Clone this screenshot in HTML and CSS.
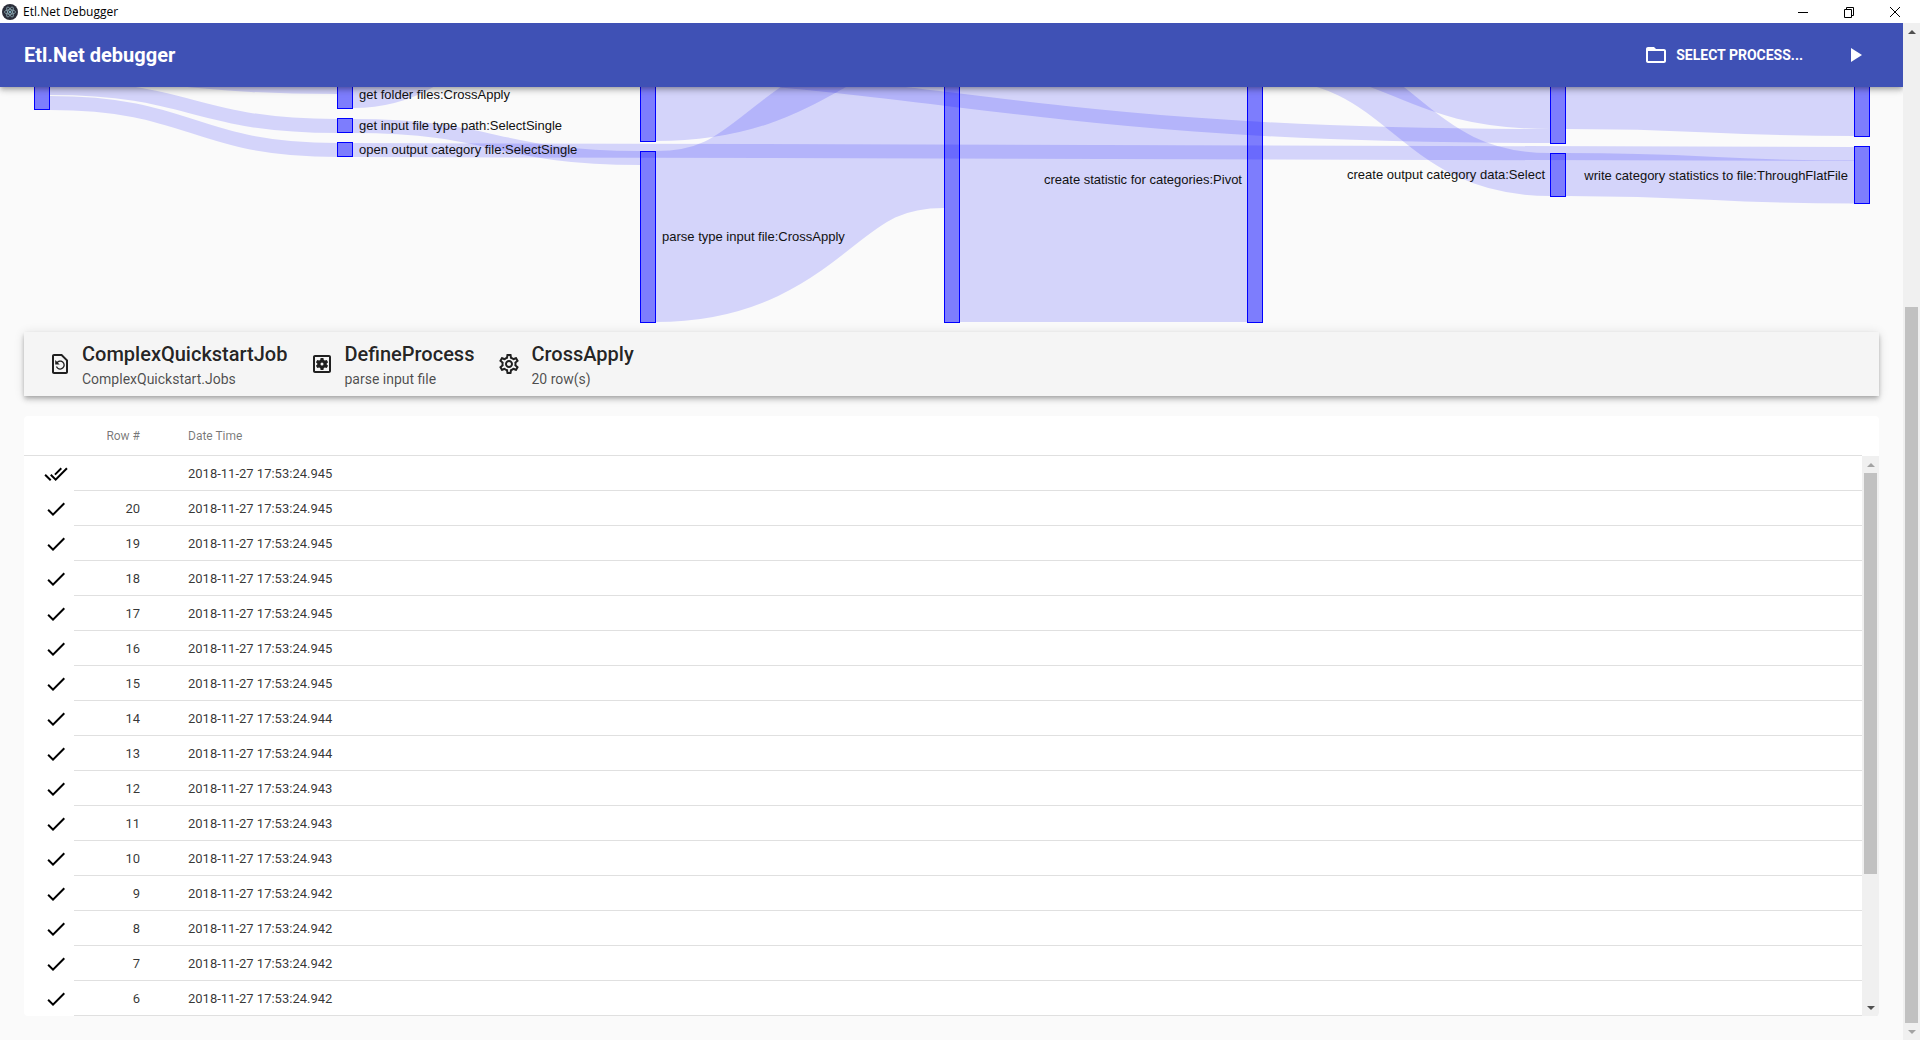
FILE: index.html
```html
<!DOCTYPE html>
<html lang="en">
<head>
<meta charset="utf-8">
<title>Etl.Net Debugger</title>
<link rel="stylesheet" href="styles.css">
</head>
<body>
<svg width="0" height="0" class="sprite" aria-hidden="true">
  <symbol id="check" viewBox="0 0 24 24"><path d="M9 16.17L4.83 12l-1.42 1.41L9 19 21 7l-1.41-1.41z"/></symbol>
  <symbol id="check-all" viewBox="0 0 24 24"><path d="M18 7l-1.41-1.41-6.34 6.34 1.41 1.41L18 7zm4.24-1.41L11.66 16.17 7.48 12l-1.41 1.41L11.66 19l12-12-1.42-1.41zM.41 13.41L6 19l1.41-1.41L1.83 12 .41 13.41z"/></symbol>
</svg>
<div class="window">
  <header class="titlebar">
    <svg class="app-icon" viewBox="0 0 16 16" aria-hidden="true">
      <circle cx="8" cy="8" r="8" fill="#2b2e3a"/>
      <g fill="none" stroke="#b4dbe4" stroke-opacity=".75" stroke-width=".7">
        <ellipse cx="8" cy="8" rx="5.6" ry="2.2"/>
        <ellipse cx="8" cy="8" rx="5.6" ry="2.2" transform="rotate(60 8 8)"/>
        <ellipse cx="8" cy="8" rx="5.6" ry="2.2" transform="rotate(120 8 8)"/>
      </g>
      <circle cx="8" cy="8" r=".9" fill="#9feaf9"/>
    </svg>
    <span class="titlebar-text">Etl.Net Debugger</span>
    <div class="window-buttons">
      <button type="button" aria-label="Minimize"><svg viewBox="0 0 12 12"><path d="M1 6.500h10"/></svg></button>
      <button type="button" aria-label="Restore"><svg viewBox="0 0 12 12"><path d="M1.500 3.500h7v8h-7zM3.500 3.500v-2h7v8h-2"/></svg></button>
      <button type="button" aria-label="Close"><svg viewBox="0 0 12 12"><path d="M1 1l10 10M11 1L1 11"/></svg></button>
    </div>
  </header>
  <div class="viewport">
    <div class="page">
      <div class="toolbar">
        <h1>Etl.Net debugger</h1>
        <button type="button" class="select-process">
          <svg class="icon" viewBox="0 0 24 24" aria-hidden="true"><path d="M20 6h-8l-2-2H4c-1.100 0-1.990.9-1.990 2L2 18c0 1.100.9 2 2 2h16c1.100 0 2-.9 2-2V8c0-1.100-.9-2-2-2zm0 12H4V8h16v10z"/></svg>
          SELECT PROCESS...
        </button>
        <button type="button" class="play" aria-label="Run"><svg class="icon" viewBox="0 0 24 24"><path d="M8 5v14l11-7z"/></svg></button>
      </div>
      <svg class="sankey" viewBox="0 87 1903 245" role="img" aria-label="Process diagram">
        <g class="links">
          <path stroke-width="14" d="M50 74C193 74 193 87 337 87"/>
          <path stroke-width="14" d="M50 88C193 88 193 126 337 126"/>
          <path stroke-width="14" d="M50 103C193 103 193 150 337 150"/>
          <path stroke-width="28" d="M353 94C496 94 496 -76 640 -76"/>
          <path stroke-width="14" d="M353 126C496 126 496 158 640 158"/>
          <path stroke-width="14" d="M353 150C1103 150 1103 154 1854 154"/>
          <path stroke-width="14" d="M353 63C951 63 951 136 1550 136"/>
          <path stroke-width="160" d="M656 61C800 61 800 -19 944 -19"/>
          <path stroke-width="171" d="M656 236.500C800 236.500 800 122.500 944 122.500"/>
          <path stroke-width="286" d="M960 179C1103 179 1103 179 1247 179"/>
          <path stroke-width="43" d="M1263 58C1406 58 1406 174.500 1550 174.500"/>
          <path stroke-width="60" d="M1263 39C1406 39 1406 99 1550 99"/>
          <path stroke-width="60" d="M1566 99C1710 99 1710 106 1854 106"/>
          <path stroke-width="43" d="M1566 174.500C1710 174.500 1710 182 1854 182"/>
        </g>
        <g class="nodes">
          <rect x="34.500" y="60.500" width="15" height="49"/>
          <rect x="337.500" y="80.500" width="15" height="28"/>
          <rect x="337.500" y="118.500" width="15" height="14"/>
          <rect x="337.500" y="142.500" width="15" height="14"/>
          <rect x="640.500" y="60.500" width="15" height="81"/>
          <rect x="640.500" y="151.500" width="15" height="171"/>
          <rect x="944.500" y="36.500" width="15" height="286"/>
          <rect x="1247.500" y="36.500" width="15" height="286"/>
          <rect x="1550.500" y="60.500" width="15" height="83"/>
          <rect x="1550.500" y="153.500" width="15" height="43"/>
          <rect x="1854.500" y="60.500" width="15" height="76"/>
          <rect x="1854.500" y="146.500" width="15" height="57"/>
        </g>
        <g class="labels">
          <text x="359" y="99">get folder files:CrossApply</text>
          <text x="359" y="130">get input file type path:SelectSingle</text>
          <text x="359" y="154">open output category file:SelectSingle</text>
          <text x="662" y="241">parse type input file:CrossApply</text>
          <text class="end" x="1242" y="184">create statistic for categories:Pivot</text>
          <text class="end" x="1545" y="179">create output category data:Select</text>
          <text class="end" x="1848" y="180">write category statistics to file:ThroughFlatFile</text>
        </g>
      </svg>
      <section class="summary">
        <div class="summary-item">
          <svg class="icon" viewBox="0 0 24 24" aria-hidden="true"><path d="M14 2H6c-1.100 0-2 .9-2 2v16c0 1.100.89 2 1.990 2H18c1.100 0 2-.9 2-2V8l-6-6zm4 18H6V4h7.170L18 8.830V20z"/><path d="M9 9.800L7.200 8v4.600h4.600L9.900 10.700c.6-.6 1.400-.9 2.300-.9 1.800 0 3.300 1.500 3.300 3.300s-1.500 3.300-3.300 3.300c-1.300 0-2.500-.8-3-2H7.800c.6 1.900 2.300 3.300 4.400 3.300 2.500 0 4.600-2.100 4.600-4.600s-2.100-4.600-4.600-4.600c-1.200 0-2.400.5-3.200 1.300z"/></svg>
          <div class="summary-text"><h2>ComplexQuickstartJob</h2><p>ComplexQuickstart.Jobs</p></div>
        </div>
        <div class="summary-item">
          <svg class="icon" viewBox="0 0 24 24" aria-hidden="true"><path d="M19 3H5c-1.110 0-2 .9-2 2v14c0 1.100.89 2 2 2h14c1.110 0 2-.9 2-2V5c0-1.100-.89-2-2-2zm0 16H5V5h14v14z"/><path d="M10.600 6h2.800l.4 1.900 1.100.6 1.800-.6 1.400 2.400-1.400 1.200v1l1.400 1.200-1.400 2.400-1.800-.6-1.100.6-.4 1.900h-2.800l-.4-1.900-1.100-.6-1.800.6-1.400-2.400 1.400-1.200v-1l-1.400-1.200 1.400-2.400 1.800.6 1.100-.6zM12 10.500a1.500 1.500 0 1 0 0 3 1.500 1.500 0 0 0 0-3z" fill-rule="evenodd"/></svg>
          <div class="summary-text"><h2>DefineProcess</h2><p>parse input file</p></div>
        </div>
        <div class="summary-item">
          <svg class="icon" viewBox="0 0 24 24" aria-hidden="true"><path d="M19.430 12.980c.04-.32.07-.64.07-.98s-.03-.66-.07-.98l2.110-1.650c.19-.15.24-.42.12-.64l-2-3.460c-.09-.16-.26-.25-.44-.25-.06 0-.12.010-.17.030l-2.490 1c-.52-.4-1.080-.73-1.690-.98l-.38-2.650C14.460 2.180 14.250 2 14 2h-4c-.25 0-.46.18-.49.42l-.38 2.650c-.61.25-1.170.59-1.690.98l-2.490-1c-.06-.02-.12-.03-.18-.03-.17 0-.34.09-.43.25l-2 3.460c-.13.22-.07.49.12.64l2.110 1.650c-.04.32-.07.65-.07.98s.03.66.07.98l-2.110 1.650c-.19.15-.24.42-.12.64l2 3.460c.09.16.26.25.44.25.06 0 .12-.01.17-.03l2.490-1c.52.4 1.080.73 1.690.98l.38 2.650c.03.24.24.42.49.42h4c.25 0 .46-.18.49-.42l.38-2.650c.61-.25 1.170-.59 1.690-.98l2.490 1c.06.02.12.03.18.03.17 0 .34-.09.43-.25l2-3.460c.12-.22.07-.49-.12-.64l-2.110-1.650zm-1.980-1.710c.04.31.05.52.05.73s-.02.43-.05.73l-.14 1.130.89.7 1.080.84-.7 1.210-1.270-.51-1.040-.42-.9.68c-.43.32-.84.56-1.250.73l-1.060.43-.16 1.130-.2 1.350h-1.400l-.19-1.350-.16-1.130-1.060-.43c-.43-.18-.83-.41-1.230-.71l-.91-.7-1.060.43-1.270.51-.7-1.210 1.080-.84.89-.7-.14-1.130c-.03-.31-.05-.54-.05-.74s.02-.43.05-.73l.14-1.130-.89-.7-1.080-.84.7-1.210 1.270.51 1.040.42.9-.68c.43-.32.84-.56 1.250-.73l1.060-.43.16-1.130.2-1.350h1.390l.19 1.350.16 1.130 1.060.43c.43.18.83.41 1.230.71l.91.7 1.060-.43 1.270-.51.7 1.210-1.070.85-.89.7.14 1.130zM12 8c-2.210 0-4 1.790-4 4s1.790 4 4 4 4-1.790 4-4-1.790-4-4-4zm0 6c-1.100 0-2-.9-2-2s.9-2 2-2 2 .9 2 2-.9 2-2 2z"/></svg>
          <div class="summary-text"><h2>CrossApply</h2><p>20 row(s)</p></div>
        </div>
      </section>
      <section class="traces">
        <table class="trace-table">
          <thead><tr><th class="status"></th><th class="num" scope="col">Row #</th><th scope="col">Date Time</th><th class="gutter"></th></tr></thead>
          <tbody id="rows"></tbody>
        </table>
        <div class="scrollbar inner" aria-hidden="true"><i class="up off"></i><b></b><i class="down"></i></div>
      </section>
    </div>
    <div class="scrollbar outer" aria-hidden="true"><i class="up"></i><b></b><i class="down off"></i></div>
  </div>
</div>
<script src="rows.js"></script>
</body>
</html>
```
FILE: rows.js
```js
const traces = [
  ["", "945"], [20, "945"], [19, "945"], [18, "945"], [17, "945"], [16, "945"], [15, "945"],
  [14, "944"], [13, "944"], [12, "943"], [11, "943"], [10, "943"],
  [9, "942"], [8, "942"], [7, "942"], [6, "942"]
];
document.getElementById("rows").innerHTML = traces.map(([row, ms]) =>
  `<tr><td class="status"><svg class="icon"><use href="#${row === "" ? "check-all" : "check"}"/></svg></td>` +
  `<td class="num">${row}</td><td colspan="2">2018-11-27 17:53:24.${ms}</td></tr>`).join("");
```
FILE: styles.css
```css
* { box-sizing: border-box; }
body { margin: 0; background: #fafafa; font-family: Roboto, sans-serif; color: rgba(0, 0, 0, .87); }
h1, h2, p { margin: 0; }
button { border: 0; background: none; padding: 0; color: inherit; font: inherit; }
.sprite { position: absolute; }
.icon { width: 24px; height: 24px; fill: currentColor; display: block; flex: none; }

.window { display: flex; flex-direction: column; height: 100vh; overflow: hidden; }
.titlebar { display: flex; align-items: center; height: 23px; flex: none; background: #fff; padding: 0 2px; gap: 5px; color: #000; }
.app-icon { width: 16px; height: 16px; }
.titlebar-text { font: 12px/22px "Open Sans", sans-serif; flex: 1; }
.window-buttons { display: flex; }
.window-buttons button { width: 46px; height: 20px; display: grid; place-items: center; }
.window-buttons svg { width: 12px; height: 12px; fill: none; stroke: #000; }

.viewport { display: flex; flex: 1; min-height: 0; }
.page { flex: 1; min-width: 0; overflow: hidden; }
.toolbar { position: relative; display: flex; align-items: center; height: 64px; padding: 0 24px; background: #3f51b5; color: #fff;
  box-shadow: 0 2px 4px -1px rgba(0,0,0,.2), 0 4px 5px rgba(0,0,0,.14), 0 1px 10px rgba(0,0,0,.12); }
.toolbar h1 { flex: 1; font-size: 20px; line-height: 24px; font-weight: 700; }
.select-process { display: flex; align-items: center; gap: 8px; padding: 0 16px; height: 36px; font-size: 14px; font-weight: 700; }
.play { width: 48px; height: 48px; display: grid; place-items: center; margin-left: 12px; }

.sankey { display: block; width: 100%; }
.links path { fill: none; stroke: #00f; stroke-opacity: .15; }
.nodes rect { fill: #00f; fill-opacity: .5; stroke: #00f; }
.labels text { font: 13px "Liberation Sans", Arial, sans-serif; fill: #111; }
.labels .end { text-anchor: end; }

.summary { display: flex; gap: 23px; height: 64px; margin: 0 24px; padding: 0 24px; background: #f5f5f5; align-items: center;
  box-shadow: 0 2px 4px -1px rgba(0,0,0,.2), 0 4px 5px rgba(0,0,0,.14), 0 1px 10px rgba(0,0,0,.12); }
.summary-item { display: flex; align-items: center; gap: 10px; }
.summary-text { padding-top: 4px; }
.summary h2 { font-size: 20px; line-height: 26px; font-weight: 500; }
.summary p { font-size: 14px; line-height: 24px; color: rgba(0, 0, 0, .7); }

.traces { position: relative; margin: 20px 24px 0; background: #fff; border-radius: 4px; overflow: hidden; }
.trace-table { width: 100%; border-collapse: separate; border-spacing: 0; table-layout: fixed; font-size: 13px; }
.trace-table th { height: 40px; padding: 0; font-size: 12px; font-weight: 400; text-align: left; color: rgba(0, 0, 0, .54); border-bottom: 1px solid #e0e0e0; }
.trace-table td { height: 35px; padding: 0; border-bottom: 1px solid #e0e0e0; color: rgba(0, 0, 0, .8); }
.trace-table .status { width: 50px; }
.trace-table td.status { border-bottom: 0; padding-left: 20px; color: #000; }
.trace-table .num { width: 114px; padding-right: 48px; text-align: right; }
.trace-table .gutter { width: 17px; border: 0; }

.scrollbar { display: flex; flex-direction: column; width: 17px; flex: none; background: #f0f0f0; align-items: center; }
.scrollbar i { height: 17px; width: 17px; display: grid; place-items: center; }
.scrollbar i::before { content: ""; border: 4px solid transparent; border-top-width: 0; border-bottom-color: #505050; }
.scrollbar .down::before { border-top: 4px solid #505050; border-bottom: 0; }
.scrollbar .up.off::before { border-bottom-color: #a3a3a3; }
.scrollbar .down.off::before { border-top-color: #a3a3a3; }
.scrollbar b { width: 13px; background: #c1c1c1; }
.scrollbar .down { margin-top: auto; }
.outer b { height: 716px; margin-top: 267px; }
.inner { position: absolute; right: 0; top: 40px; bottom: 0; }
.inner b { height: 401px; }
```
